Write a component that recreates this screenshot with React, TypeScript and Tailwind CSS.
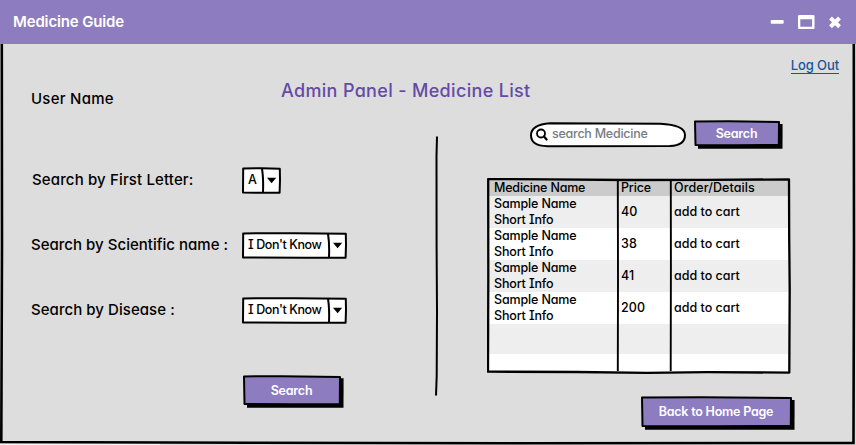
import React from "react";

type ButtonProps = {
  label: string;
  className: string;
  width: number;
  height: number;
};

function SketchButton({ label, className, width: w, height: h }: ButtonProps) {
  return (
    <button
      className={`relative flex items-center justify-center pr-px text-[12.5px] font-semibold leading-none tracking-[-0.22px] text-white ${className}`}
    >
      <svg className="absolute left-0 top-0 overflow-visible" width={w} height={h} aria-hidden="true">
        <path d={`M4 3 L${w + 2.6} 3.2 L${w + 2.5} ${h + 2.8} L4 ${h + 2.8} Z`} fill="#000" />
        <path
          d={`M1 1.4 L${w * 0.4} 1.2 L${w - 1} 1.9 L${w - 1.2} ${h - 1} L${w * 0.5} ${h - 0.8} L1.5 ${h - 1} Z`}
          fill="#8e7cc1"
          stroke="#000"
          strokeWidth="2"
          strokeLinejoin="round"
        />
      </svg>
      <span className="relative whitespace-nowrap">{label}</span>
    </button>
  );
}

function SketchSelect({ value, className, width: w }: { value: string; className: string; width: number }) {
  return (
    <div className={`relative flex h-[27px] items-center pl-[6px] text-[12.5px] leading-none tracking-[-0.4px] ${className}`}>
      <svg className="absolute left-0 top-0" width={w} height="27" aria-hidden="true">
        <path
          d={`M1.2 1.4 L${w * 0.5} 1.2 L${w - 1.2} 1.8 L${w - 1} 13 L${w - 1.4} 25.7 L${w * 0.6} 25.7 L1 25.6 Z`}
          fill="#fff"
          stroke="#000"
          strokeWidth="2"
          strokeLinejoin="round"
        />
        <path d={`M${w - 19} 1.5 Q${w - 17.4} 12 ${w - 18} 25.5`} fill="none" stroke="#000" strokeWidth="2" />
        <path d={`M${w - 14} 10.8 H${w - 4.8} L${w - 9.4} 16.2 Z`} fill="#000" />
      </svg>
      <span className="relative whitespace-nowrap">{value}</span>
    </div>
  );
}

const rows = [
  { price: "40", shade: "bg-[#eeeeee]" },
  { price: "38", shade: "bg-white" },
  { price: "41", shade: "bg-[#eeeeee]" },
  { price: "200", shade: "bg-white" },
];

function MedicineTable() {
  return (
    <div className="relative flex h-[196px] w-[304px] flex-col px-[2px] pt-[2px] text-[12.5px] leading-4 tracking-[-0.15px]">
      <div className="grid h-[16px] shrink-0 grid-cols-[128px_53px_1fr] bg-[#cbcbcb] pl-px">
        <span className="pl-[4px] tracking-[-0.2px]">Medicine Name</span>
        <span className="pl-[3px]">Price</span>
        <span className="pl-[3px] tracking-[0.1px]">Order/Details</span>
      </div>
      {rows.map((row) => (
        <div
          key={row.price}
          className={`grid h-8 shrink-0 grid-cols-[128px_53px_1fr] items-center pl-px ${row.shade}`}
        >
          <span className="pl-[4px]">
            Sample Name
            <br />
            Short Info
          </span>
          <span className="pl-[3px] tracking-[0.1px]">{row.price}</span>
          <span className="pl-[3px] tracking-[0px]">add to cart</span>
        </div>
      ))}
      <div className="h-[30px] shrink-0 bg-[#eeeeee]" />
      <div className="h-[18px] shrink-0 bg-white" />
      <svg className="absolute left-0 top-0" width="304" height="196" fill="none" stroke="#000" aria-hidden="true">
        <path
          d="M1.2 1 L60 1.4 L140 2 L220 1.8 L302 1.4 L302.2 60 L302.7 110 L302.3 194.6 L220 194.2 L160 194.8 L90 194 L1 193.7 L1.3 100 Z"
          strokeWidth="2.3"
          strokeLinejoin="round"
        />
        <path d="M130.8 2 L131 100 L130.8 193 M183.8 2 L183.9 90 L183.7 193" strokeWidth="1.9" />
      </svg>
    </div>
  );
}

export default function App() {
  return (
    <div className="flex h-[445px] w-[856px] flex-col overflow-hidden bg-[#dddddd] font-['Inter','Liberation_Sans',sans-serif] font-medium text-black [font-feature-settings:'cv08','cv11']">
      <header className="flex h-11 shrink-0 items-center justify-between bg-[#8e7cc1] pb-px pl-[13px] pr-[15px] text-white">
        <h1 className="text-[15px] font-semibold leading-none tracking-[-0.15px]">Medicine Guide</h1>
        <svg className="mt-px" width="71" height="16" aria-hidden="true">
          <rect x="0.700" y="6" width="13" height="3.800" rx="1" fill="#fff" />
          <path fill="#fff" fillRule="evenodd" d="M29 1h14.500q1 0 1 1v12q0 1-1 1H29q-1 0-1-1V2q0-1 1-1ZM30.300 5.300v7.500h11.800V5.300Z" />
          <path d="M60.500 4 L69.500 12.800 M69.500 4 L60.500 12.800" stroke="#fff" strokeWidth="4" />
        </svg>
      </header>

      <main className="relative flex h-[401px] flex-col">
        <svg className="absolute left-0 top-0" width="856" height="401" fill="none" stroke="#000" aria-hidden="true">
          <path d="M1.800 0 L2 200 L1.300 398 L250 398.700 L520 399.200 L853.500 399 L854 200 L853.800 0" strokeWidth="2.600" />
          <path d="M0 400.800 H160" stroke="#fff" strokeWidth="1" />
        </svg>

        <div className="flex h-[72px] shrink-0 items-start pl-[31px] pr-[17px] leading-none">
          <span className="w-[250px] pt-[47px] text-[15px] tracking-[0.25px]">User Name</span>
          <h2 className="pt-[38px] text-[18px] tracking-[0.33px] text-[#654aa6]">Admin Panel - Medicine List</h2>
          <a className="ml-auto mt-[15px] border-b border-[#17569b] pb-px text-[13px] tracking-[-0.1px] text-[#17569b]">
            Log Out
          </a>
        </div>

        <div className="flex">
          <section className="flex w-[434px] shrink-0 flex-col pl-[31px] pt-[51px] text-[15px]">
            <div className="flex flex-col gap-[38px]">
              <div className="flex h-[27px] items-center">
                <span className="w-[211px] pl-px tracking-[0.14px]">Search by First Letter:</span>
                <SketchSelect value="A" width={39} className="w-[39px]" />
              </div>
              <div className="flex h-[27px] items-center">
                <span className="w-[211px] whitespace-nowrap tracking-[0.02px]">Search by Scientific name :</span>
                <SketchSelect value="I Don't Know" width={105} className="w-[105px]" />
              </div>
              <div className="flex h-[27px] items-center">
                <span className="w-[211px] tracking-[0.05px]">Search by Disease :</span>
                <SketchSelect value="I Don't Know" width={105} className="w-[105px]" />
              </div>
            </div>
            <SketchButton label="Search" width={98} height={30} className="ml-[212px] mt-[51px] h-[30px] w-[98px] pt-[2px]" />
          </section>

          <svg className="mt-[20px] shrink-0" width="6" height="261" fill="none" stroke="#000" aria-hidden="true">
            <path d="M3 0.500 L2.500 20 L2.600 110 L3 175 L2.700 240 L2 259.500" strokeWidth="2" />
          </svg>

          <section className="flex flex-col pl-[47px] pt-[4px]">
            <div className="flex items-start pl-[43px]">
              <div className="relative mt-[2px] flex h-[26px] w-[157px] items-center gap-[4px] pl-[6px]">
                <svg className="absolute left-0 top-0" width="157" height="26" aria-hidden="true">
                  <path
                    d="M20 1.300 L130 1.700 C148 2.500 155 7 155 13 C155 20 149 23.600 140 24 L18 24.200 C5 24.300 1 19.500 1 13 C1 7 7 2 20 1.300 Z"
                    fill="#fff"
                    stroke="#000"
                    strokeWidth="2"
                  />
                </svg>
                <svg className="relative mb-[2px]" width="12" height="13" fill="none" stroke="#000" aria-hidden="true">
                  <circle cx="5" cy="5.500" r="4" strokeWidth="1.800" />
                  <path d="M8 8.500 L10.600 11.500" strokeWidth="2.200" strokeLinecap="round" />
                </svg>
                <span className="relative whitespace-nowrap pb-[2px] text-[12.5px] leading-none tracking-[-0.25px] text-[#797c85]">
                  search Medicine
                </span>
              </div>
              <SketchButton label="Search" width={86} height={26} className="ml-[7px] h-[26px] w-[86px] pt-[2px]" />
            </div>
            <div className="pt-[30px]">
              <MedicineTable />
            </div>
            <SketchButton
              label="Back to Home Page"
              width={151}
              height={31}
              className="ml-[154px] mt-[22px] h-[31px] w-[151px] pt-[2px]"
            />
          </section>
        </div>
      </main>
    </div>
  );
}
